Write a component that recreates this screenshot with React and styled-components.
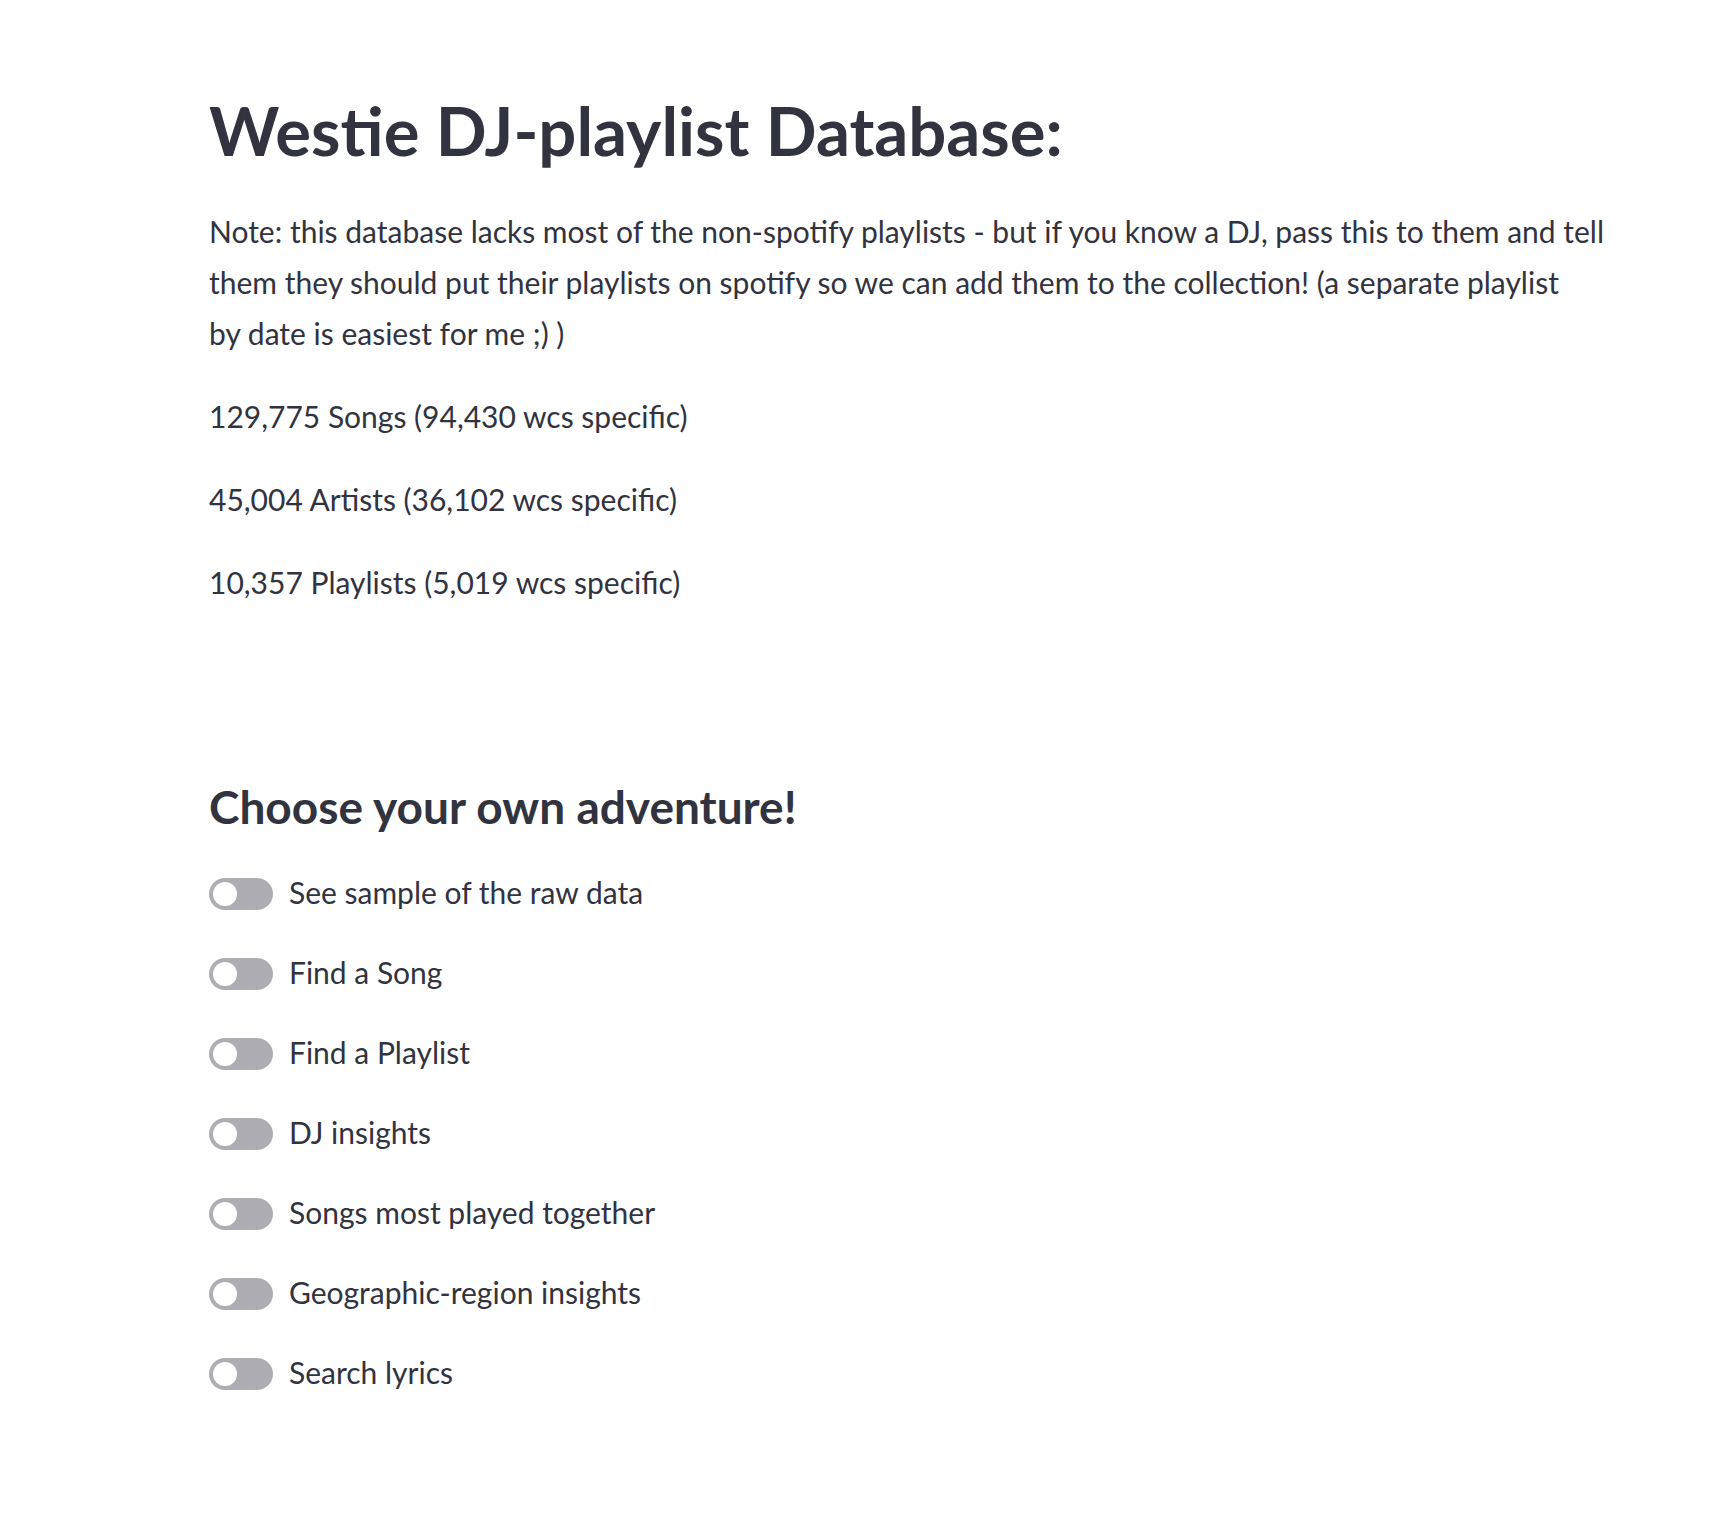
import React from "react"
import styled, { createGlobalStyle } from "styled-components"

const GlobalStyle = createGlobalStyle`
    body {
        margin: 0;
        background: #ffffff;
        font-family: Lato, "Noto Sans", sans-serif;
        color: #31333f;
    }
`

const Main = styled.main`
    max-width: 1408px;
    margin-left: 209px;
    padding: 92px 0 120px;
`

const Title = styled.h1`
    margin: 0 0 37px;
    font-size: 67px;
    line-height: 77px;
    font-weight: 700;
`

const Text = styled.p`
    margin: 0 0 32px;
    font-size: 30px;
    line-height: 51px;
`

// margin-top collapses with the paragraph's 32px bottom margin
const Heading = styled.h3`
    margin: 170px 0 31px;
    font-size: 46px;
    line-height: 58px;
    font-weight: 700;
`

const ToggleList = styled.div`
    display: flex;
    flex-direction: column;
    gap: 29px;
`

const ToggleRow = styled.label`
    display: flex;
    align-items: flex-start;
    gap: 16px;
    font-size: 30px;
    line-height: 51px;
    cursor: pointer;
`

const Track = styled.span`
    display: flex;
    align-items: center;
    box-sizing: border-box;
    width: 64px;
    height: 32px;
    margin-top: 11px;
    padding: 0 4px;
    border-radius: 16px;
    background: ${p => (p.on ? "#ff4b4b" : "#adadb3")};
    justify-content: ${p => (p.on ? "flex-end" : "flex-start")};
`

const Knob = styled.span`
    width: 24px;
    height: 24px;
    border-radius: 50%;
    background: #ffffff;
`

const Toggle = ({ label }) => {
    const [on, setOn] = React.useState(false)
    return (
        <ToggleRow onClick={() => setOn(!on)}>
            <Track on={on ? 1 : 0}>
                <Knob />
            </Track>
            {label}
        </ToggleRow>
    )
}

const options = [
    "See sample of the raw data",
    "Find a Song",
    "Find a Playlist",
    "DJ insights",
    "Songs most played together",
    "Geographic-region insights",
    "Search lyrics",
]

const App = () => {
    return (
        <>
            <GlobalStyle />
            <Main>
                <Title>Westie DJ-playlist Database:</Title>
                <Text>
                    Note: this database lacks most of the non-spotify playlists - but if you know a DJ, pass this to them and tell them they should put their playlists on spotify so we can add them to the collection! (a separate playlist by{"\u00a0"}date is easiest for me ;) )
                </Text>
                <Text>129,775 Songs (94,430 wcs specific)</Text>
                <Text>45,004 Artists (36,102 wcs specific)</Text>
                <Text>10,357 Playlists (5,019 wcs specific)</Text>
                <Heading>Choose your own adventure!</Heading>
                <ToggleList>
                    {options.map(o => (
                        <Toggle key={o} label={o} />
                    ))}
                </ToggleList>
            </Main>
        </>
    )
}

export default App
